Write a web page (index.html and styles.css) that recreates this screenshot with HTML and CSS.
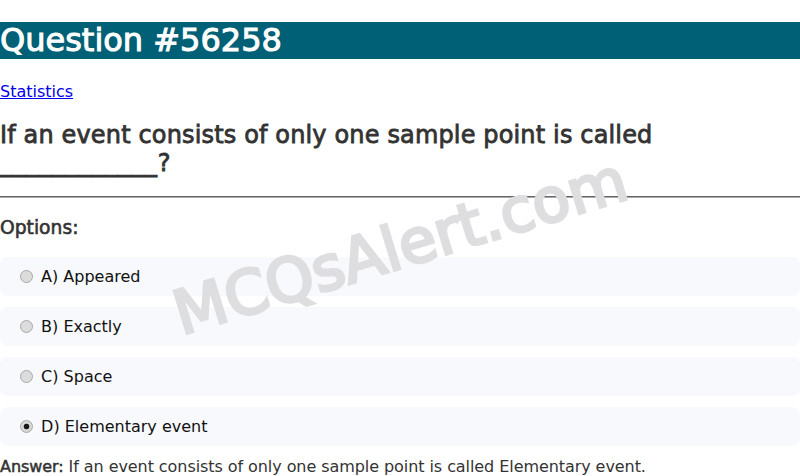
FILE: index.html
```html
<!DOCTYPE html>
<html>
<head>
<meta charset="utf-8">
<link rel="stylesheet" href="styles.css">
</head>
<body>
<div class="page">
  <h1 class="title">Question #56258</h1>
  <p class="cat"><a href="#">Statistics</a></p>
  <h2 class="question">If an event consists of only one sample point is called <span class="blank">____________</span>?</h2>
  <hr class="rule">
  <h3 class="opts-title">Options:</h3>
  <div class="options">
    <label class="option"><input class="radio" type="radio" name="q"> A) Appeared</label>
    <label class="option"><input class="radio" type="radio" name="q"> B) Exactly</label>
    <label class="option"><input class="radio" type="radio" name="q"> C) Space</label>
    <label class="option"><input class="radio" type="radio" name="q" checked> D) Elementary event</label>
  </div>
  <p class="answer"><span class="strong">Answer:</span> If an event consists of only one sample point is called Elementary event.</p>
  <div class="watermark">MCQsAlert.com</div>
</div>
</body>
</html>
```
FILE: styles.css
```css
html, body {
  margin: 0;
  padding: 0;
  background: #fff;
}
body {
  font-family: "DejaVu Sans", sans-serif;
  font-size: 16px;
  color: #333;
  overflow: hidden;
}
.page {
  position: relative;
  height: 476px;
  overflow: hidden;
}
.title {
  margin: 22px 0 23px;
  background: #006075;
  color: #fff;
  font-size: 32px;
  line-height: 37px;
  font-weight: normal;
  -webkit-text-stroke: 1px #fff;
}
.cat {
  margin: 0;
  line-height: 19px;
}
.cat a {
  color: #0000ee;
}
.question {
  margin: 20px 0 19px;
  font-size: 24px;
  line-height: 28px;
  font-weight: normal;
  color: #333;
  letter-spacing: 0.15px;
  -webkit-text-stroke: 0.8px #333;
}
.blank {
  letter-spacing: 1.15px;
  -webkit-text-stroke: 1.2px #333;
}
.rule {
  margin: 0;
  border: 0;
  border-top: 1px solid #666;
  border-bottom: 1px solid #aaa;
  height: 0;
}
.opts-title {
  margin: 19px 0 18px;
  font-size: 18.72px;
  line-height: 22px;
  font-weight: normal;
  -webkit-text-stroke: 0.6px #333;
}
.options {
  display: flex;
  flex-direction: column;
  gap: 11px;
}
.option {
  display: block;
  background: #f8f9fc;
  border-radius: 8px;
  padding: 10px 15px;
  line-height: 19px;
  color: #111;
}
.radio {
  -webkit-appearance: none;
  appearance: none;
  box-sizing: border-box;
  width: 13px;
  height: 13px;
  margin: 3px 3px 0 5px;
  vertical-align: top;
  border-radius: 50%;
  border: 1px solid #a8a8a8;
  background: #dcdcdc;
}
.radio:checked {
  background: radial-gradient(circle, #1a1a1a 0, #1a1a1a 2.5px, #d8d8d8 3.2px);
}
.answer {
  margin: 11px 0 0;
  line-height: 19px;
  color: #333;
  letter-spacing: -0.07px;
}
.strong {
  -webkit-text-stroke: 0.5px #333;
}
.watermark {
  position: absolute;
  left: 400px;
  top: 246px;
  transform: translate(-50%, -50%) rotate(-17deg);
  font-size: 61px;
  font-weight: normal;
  -webkit-text-stroke: 3px #dedee0;
  color: #dedee0;
  white-space: nowrap;
  pointer-events: none;
}
```
